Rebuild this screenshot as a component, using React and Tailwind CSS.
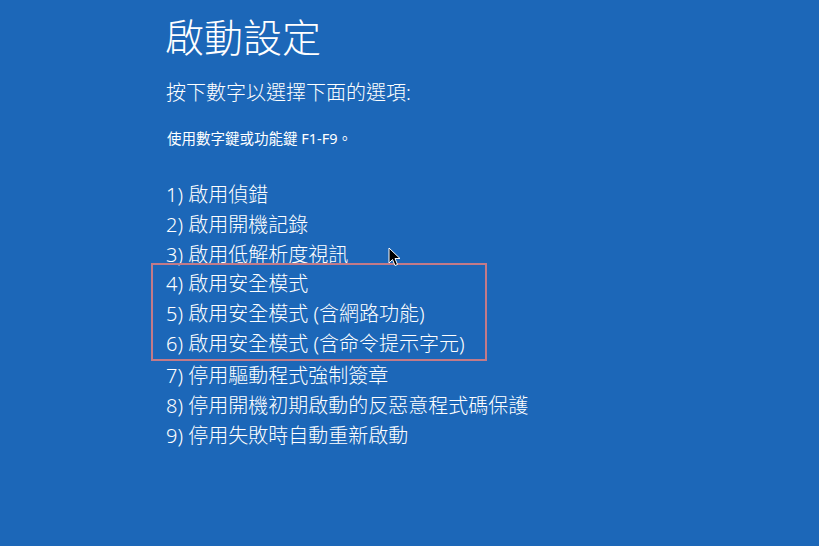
export default function App() {
  const font = { fontFamily: '"Noto Sans", "Noto Sans CJK TC", sans-serif' };
  const items1 = ["1) 啟用偵錯", "2) 啟用開機記錄", "3) 啟用低解析度視訊"];
  const items2 = ["4) 啟用安全模式", "5) 啟用安全模式 (含網路功能)", "6) 啟用安全模式 (含命令提示字元)"];
  const items3 = ["7) 停用驅動程式強制簽章", "8) 停用開機初期啟動的反惡意程式碼保護", "9) 停用失敗時自動重新啟動"];
  return (
    <div className="relative w-[819px] h-[546px] bg-[#1c67b8] text-white overflow-hidden font-['Noto_Sans','Noto_Sans_CJK_TC',sans-serif]" style={font}>
      <div className="pl-[165px] pt-[12px] flex flex-col">
        <h1 className="text-[39px] leading-[50px] font-light">啟動設定</h1>
        <p className="mt-[16px] text-[20px] leading-[30px] pl-px font-light">按下數字以選擇下面的選項:</p>
        <p className="mt-[18px] text-[14.5px] leading-[24px] pl-[2px]">使用數字鍵或功能鍵 F1-F9。</p>
        <div className="mt-[30px] flex flex-col text-[20px] leading-[30px] pl-px font-light">
          {items1.map((t) => (
            <div key={t}>{t}</div>
          ))}
          <div className="-ml-[15px] mt-[-7px] w-[336px] border-2 border-[#c27a88] pl-[13px] pt-[4px] flex flex-col">
            {items2.map((t) => (
              <div key={t}>{t}</div>
            ))}
          </div>
          {items3.map((t) => (
            <div key={t}>{t}</div>
          ))}
        </div>
      </div>
      <svg className="absolute left-[388px] top-[247px]" width="13" height="20" viewBox="0 0 13 20">
        <path d="M1 1 L1 16 L4.5 12.5 L7 18.5 L9.5 17.5 L7 11.5 L12 11.5 Z" fill="#000" stroke="#fff" strokeWidth="1" strokeLinejoin="round" />
      </svg>
    </div>
  );
}
